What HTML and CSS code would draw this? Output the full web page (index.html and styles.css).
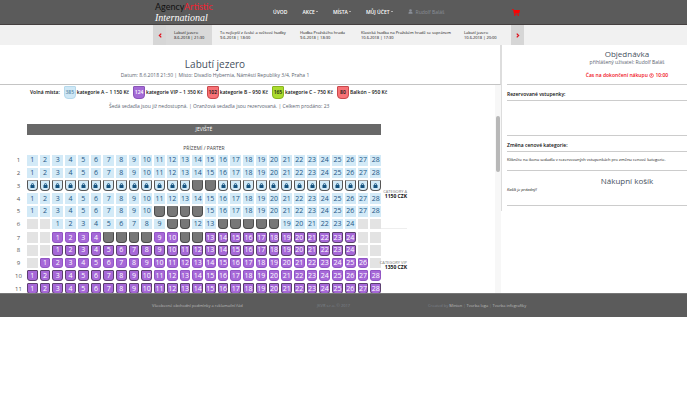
FILE: index.html
```html
<!DOCTYPE html>
<html lang="cs">
<head>
<meta charset="utf-8">
<meta name="viewport" content="width=device-width, initial-scale=1">
<title>Labutí jezero</title>
<link rel="stylesheet" href="styles.css">
</head>
<body>
<header class="topbar">
  <div class="container topbar-row">
    <a class="logo" href="#"><span class="logo-name">Agency<em>Artistic</em></span><span class="logo-sub">International</span></a>
    <nav class="nav">
      <a href="#">ÚVOD</a>
      <a href="#" class="drop">AKCE</a>
      <a href="#" class="drop">MÍSTA</a>
      <a href="#" class="drop">MŮJ ÚČET</a>
      <a href="#" class="user"><svg viewBox="0 0 10 10"><circle cx="5" cy="3" r="2.6"/><path d="M1 9.500V8q0-2.500 2.500-2.500h3Q9 5.500 9 8v1.500z"/></svg>Rudolf Baláš</a>
    </nav>
    <a class="cart" href="#" aria-label="Košík"><svg viewBox="0 0 16 14"><path d="M0 0h3l.5 2H16l-1.500 6.500H5.200l.3 1.200H14V11H4.300L2.200 1.500H0z"/><circle cx="5.500" cy="12.500" r="1.500"/><circle cx="12.500" cy="12.500" r="1.500"/></svg></a>
  </div>
</header>
<div class="dates">
  <div class="container dates-row">
    <button class="arrow" type="button" aria-label="Předchozí"><svg viewBox="0 0 6 8"><path d="M5 1L2 4l3 3"/></svg></button>
    <a class="date current" href="#">Labutí jezero<br>8.6.2018 | 21:30</a>
    <a class="date d2" href="#">To nejlepší z české a světové hudby<br>9.6.2018 | 18:00</a>
    <a class="date d3" href="#">Hudba Pražského hradu<br>9.6.2018 | 18:30</a>
    <a class="date d4" href="#">Klasická hudba na Pražském hradě se sopránem<br>10.6.2018 | 17:30</a>
    <a class="date d5" href="#">Labutí jezero<br>10.6.2018 | 20:00</a>
    <button class="arrow" type="button" aria-label="Další"><svg viewBox="0 0 6 8"><path d="M1 1l3 3-3 3"/></svg></button>
  </div>
</div>
<main class="main">
  <section class="hall">
    <div class="event">
      <h1>Labutí jezero</h1>
      <p>Datum: 8.6.2018 21:30 | Místo: Divadlo Hybernia, Náměstí Republiky 3/4, Praha 1</p>
    </div>
    <div class="hall-body">
      <div class="plan">
        <div class="legend">
          <span class="free">Volná místa:</span>
          <span class="item"><b class="chip a">385</b>kategorie A – 1 150 Kč</span>
          <span class="item"><b class="chip vip">124</b>kategorie VIP – 1 350 Kč</span>
          <span class="item"><b class="chip b">102</b>kategorie B – 950 Kč</span>
          <span class="item"><b class="chip c">165</b>kategorie C – 750 Kč</span>
          <span class="item"><b class="chip b">80</b>Balkón – 950 Kč</span>
        </div>
        <p class="note">Šedá sedadla jsou již nedostupná. | Oranžová sedadla jsou rezervovaná. | Celkem prodáno: 23</p>
        <div class="stage">JEVIŠTĚ</div>
        <h2 class="floor">PŘÍZEMÍ / PARTER</h2>
        <div class="block">
          <div class="rows" id="block-a"></div>
          <p class="price price-a">CATEGORY A<b>1150 CZK</b></p>
        </div>
        <div class="block">
          <div class="rows" id="block-vip"></div>
          <p class="price price-vip">CATEGORY VIP<b>1350 CZK</b></p>
        </div>
      </div>
      <div class="track"><div class="thumb"></div></div>
    </div>
  </section>
  <aside class="order">
    <div class="order-head">
      <h2>Objednávka</h2>
      <p>přihlášený uživatel: Rudolf Baláš</p>
      <p class="timer">Čas na dokončení nákupu <svg viewBox="0 0 8 8"><circle cx="4" cy="4" r="3"/><path d="M4 2v2.500h-1"/></svg> 10:00</p>
    </div>
    <h3>Rezervované vstupenky:</h3>
    <div class="tickets"></div>
    <h3>Změna cenové kategorie:</h3>
    <p class="hint">Klikněte na ikonu sedadla v rezervovaných vstupenkách pro změnu cenové kategorie.</p>
    <div class="basket">
      <h2>Nákupní košík</h2>
      <p>Košík je prázdný!</p>
    </div>
  </aside>
</main>
<footer class="footer">
  <a class="terms" href="#">Všeobecné obchodní podmínky a reklamační řád</a>
  <span class="copy">JKVR s.r.o. © 2017</span>
  <span class="credits">Created by <a href="#">Minion</a> | <a href="#">Tvorba loga</a> | <a href="#">Tvorba infografiky</a></span>
</footer>
<script src="seats.js"></script>
</body>
</html>
```

FILE: styles.css
```css
* { box-sizing: border-box; }
body { margin: 0; background: #fff; color: #333; font-family: "Open Sans", "Noto Sans", sans-serif; font-size: 5px; line-height: 7px; }
h1, h2, h3, p { margin: 0; font-weight: 400; }
a { color: inherit; text-decoration: none; }
button { margin: 0; padding: 0; border: 0; font: inherit; color: inherit; }
.container { margin: 0 163px 0 153px; }

.topbar { background: #5b5b5b; border-bottom: 1px solid #443f3f; }
.topbar-row { display: flex; align-items: center; height: 24px; }
.logo { display: flex; flex-direction: column; width: 120px; padding-left: 2px; }
.logo-name { font: 9px/11px Lato, sans-serif; color: #111; }
.logo-name em { font-style: normal; color: #ee2030; }
.logo-sub { font: italic 10px/11px "Liberation Serif", serif; color: #fff; }
.nav { display: flex; flex: 1; gap: 15px; color: #fff; font-weight: 600; }
.drop::after { content: ""; display: inline-block; margin-left: 1px; border: 1px solid transparent; border-top-color: #fff; vertical-align: middle; }
.user { color: #8a8f98; font-weight: 400; }
.user svg { width: 5px; height: 5px; margin-right: 3px; fill: #8a8f98; }
.cart { display: flex; margin-right: 4px; }
.cart svg { width: 8px; height: 7px; fill: #f00; }

.dates { background: #f1f1f1; }
.dates-row { display: flex; height: 20px; }
.arrow { display: flex; align-items: center; justify-content: center; width: 13px; background: #d6d6d6; }
.arrow svg { width: 4px; height: 5px; fill: none; stroke: #e0101c; stroke-width: 2; }
.date { padding: 5px 0 0 8px; font-size: 4px; line-height: 5px; white-space: nowrap; color: #111; }
.current { width: 46px; background: #d9d9d9; }
.d2 { width: 80px; }
.d3 { width: 61px; }
.d4 { width: 103px; }
.d5 { flex: 1; }

.main { display: flex; height: 248px; overflow: hidden; }
.hall { display: flex; flex-direction: column; flex: 1; min-width: 0; }
.event { height: 40px; padding: 12px 70px 0 0; border-bottom: 1px solid #c4c4c4; border-right: 1px solid #ddd; text-align: center; color: #5a6470; }
.event h1 { font-size: 10px; line-height: 14px; color: #465060; }
.event p { line-height: 9px; }
.hall-body { display: flex; flex: 1; min-height: 0; }
.plan { flex: 1; min-width: 0; padding: 1px 114px 0 12px; }
.legend { display: flex; align-items: center; gap: 4px; margin-left: 18px; white-space: nowrap; font-weight: 600; color: #111; }
.item { display: flex; align-items: center; gap: 1px; }
.chip { width: 12px; height: 13px; border: 1px solid; border-radius: 1px 1px 4px 4px; text-align: center; line-height: 11px; font-weight: 600; }
.a { background: #cfe8f6; border-color: #b5d9ec; color: #5d8aa8; }
.vip { background: #a46bd6; border-color: #8a55b8; color: #fff; }
.b { background: #f77377; border-color: #c9484c; }
.c { background: #abdc2e; border-color: #88b31e; }
.note { margin: 4px 0 0 97px; white-space: nowrap; color: #5a6470; }
.stage { margin: 14px 0 0 15px; background: #686868; color: #fff; text-align: center; line-height: 11px; }
.floor { margin: 9px 0 3px 15px; text-align: center; font-size: 5px; line-height: 8px; color: #444; }
.block { display: flex; margin-bottom: 3px; }
.rows { display: flex; flex-direction: column; flex: 1; gap: 2px; }
.row { display: grid; grid-template-columns: 13px repeat(28, 1fr); column-gap: 2px; align-items: center; font-size: 7px; color: #555; }
.row > span:first-child { text-align: center; line-height: 8px; font-size: 6px; }
.seat { aspect-ratio: 1; min-width: 0; display: flex; align-items: center; justify-content: center; background: #d3eaf7; color: #1c5685; line-height: 8px; }
.none { background: #e3e3e3; }
.lock { border: 1px solid #555; border-top-color: #999; border-radius: 1px 1px 4px 4px; }
.lock svg { width: 5px; height: 5px; fill: #14527f; }
.taken { background: #777; border: 1px solid #4c4c4c; border-top-color: #777; border-radius: 1px 1px 4px 4px; }
.purple { background: #a668d8; color: #fff; border: 1px solid #9155c4; border-radius: 1px 1px 3px 3px; }
.edged { border-color: #5c4070; }
.price { display: flex; flex-direction: column; align-items: flex-end; width: 26px; margin-right: -26px; white-space: nowrap; font-size: 4px; line-height: 5px; color: #777; }
.price b { font-size: 5px; color: #111; }
.price-a { padding-top: 34px; border-bottom: 1px solid #eee; }
.price-vip { padding-top: 28px; }
.track { width: 6px; background: #f7f7f7; padding-top: 31px; }
.thumb { width: 4px; height: 56px; margin-left: 1px; border-radius: 2px; background: #b8b8b8; }

.order { width: 186px; height: 166px; padding-left: 5px; border-left: 1px solid #ddd; color: #111; }
.order-head { height: 40px; padding: 3px 0 0 60px; border-bottom: 1px solid #ccc; text-align: center; white-space: nowrap; color: #5a6470; }
.order h2 { font-size: 8px; line-height: 11px; color: #465060; }
.timer { margin-top: 6px; color: #f01020; font-weight: 600; }
.timer svg { width: 5px; height: 5px; fill: none; stroke: #f01020; stroke-width: 1; vertical-align: middle; }
.order h3 { height: 16px; padding-top: 6px; border-bottom: 1px solid #ccc; font-size: 5px; line-height: 7px; font-weight: 600; }
.tickets { height: 35px; border-bottom: 1px solid #ccc; }
.hint { height: 19px; padding-top: 4px; border-bottom: 1px solid #ccc; font-size: 4px; white-space: nowrap; }
.basket { height: 35px; padding-top: 4px; border-bottom: 1px solid #ccc; }
.basket h2 { padding-left: 60px; text-align: center; }
.basket p { font-size: 4px; font-style: italic; }

.footer { display: flex; align-items: center; height: 24px; padding-left: 152px; background: #5b5b5b; border-top: 1px solid #777; color: #7d828a; font-size: 4px; }
.footer a { color: #bbb; }
.terms { width: 165px; }
.copy { width: 111px; }
```

FILE: seats.js
```js
// Seat codes: _ no seat, a category A, L locked, x taken, p VIP, P VIP with dark edge.
// Numbers count every real seat in a row, taken ones included.
const plan = {
  "block-a": [
    "a".repeat(28),
    "a".repeat(28),
    "L".repeat(13) + "xx" + "L".repeat(13),
    "a".repeat(28),
    "a".repeat(10) + "xxxx" + "a".repeat(14),
    "__aaaaaaaaaxxaaxxxxxaaaaaa__"
  ],
  "block-vip": [
    "__ppppxxxxppxxPPPPPPPPPPPP__",
    "__" + "P".repeat(24) + "__",
    "_" + "p".repeat(26) + "_",
    "P".repeat(10) + "p".repeat(18),
    "P".repeat(28)
  ]
};
const lock = '<svg viewBox="0 0 10 10"><path d="M1 4h1.500V3a2.500 2.500 0 0 1 5 0v1H9v6H1zM4 4h2V3a1 1 0 0 0-2 0z"/></svg>';
const styles = { a: "", L: "lock", x: "taken", p: "purple", P: "purple edged" };
let rowNumber = 0;
for (const [id, rows] of Object.entries(plan)) {
  for (const codes of rows) {
    rowNumber++;
    let number = 0;
    let html = `<span>${rowNumber}</span>`;
    for (const code of codes) {
      if (code === "_") { html += '<i class="seat none"></i>'; continue; }
      number++;
      const content = code === "L" ? lock : code === "x" ? "" : number;
      html += `<button type="button" class="seat ${styles[code]}" aria-label="Řada ${rowNumber}, sedadlo ${number}">${content}</button>`;
    }
    const row = document.createElement("div");
    row.className = "row";
    row.innerHTML = html;
    document.getElementById(id).append(row);
  }
}
```
